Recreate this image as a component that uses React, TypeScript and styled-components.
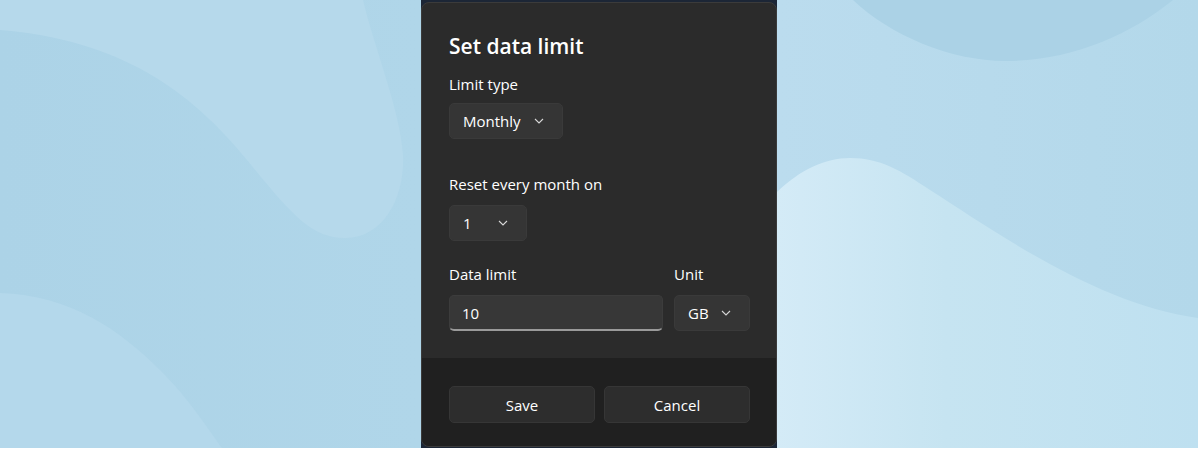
import styled, { createGlobalStyle } from 'styled-components';

const GlobalStyle = createGlobalStyle`
  body {
    margin: 0;
    background: #ffffff;
    font-family: "Open Sans", "Noto Sans", sans-serif;
  }
`;

function Wallpaper() {
  return (
    <Backdrop viewBox="0 0 1198 448" preserveAspectRatio="none">
      <defs>
        <linearGradient id="base" x1="0" y1="0" x2="1" y2="0">
          <stop offset="0" stopColor="#acd3e7" />
          <stop offset="0.35" stopColor="#b0d6e9" />
          <stop offset="0.65" stopColor="#bbdcee" />
          <stop offset="1" stopColor="#b3d8ea" />
        </linearGradient>
        <linearGradient id="lower" x1="0" y1="0" x2="1" y2="0">
          <stop offset="0" stopColor="#d4ebf7" />
          <stop offset="0.4" stopColor="#c6e4f1" />
          <stop offset="1" stopColor="#bee0f0" />
        </linearGradient>
      </defs>
      <rect width="1198" height="448" fill="url(#base)" />
      <path
        d="M0,30 C120,40 190,90 247,160 C290,212 310,238 345,238 C385,238 405,195 403,155 C400,110 375,50 363,0 L0,0 Z"
        fill="#b6d9eb"
      />
      <path d="M0,293 C70,295 120,330 160,370 C190,400 205,425 222,448 L0,448 Z" fill="#b4d8eb" />
      <path d="M853,0 C890,35 950,61 1006,61 C1070,61 1130,35 1173,0 Z" fill="#abd2e6" />
      <path
        d="M777,192 C800,170 825,158 850,158 C880,158 900,170 930,190 C1000,235 1100,305 1198,318 L1198,448 L777,448 Z"
        fill="url(#lower)"
      />
    </Backdrop>
  );
}

function Chevron() {
  return (
    <svg width="10" height="6" viewBox="0 0 10 6">
      <polyline points="1,1 5,5 9,1" fill="none" stroke="#d6d6d6" strokeWidth="1.1" />
    </svg>
  );
}

export default function App() {
  return (
    <>
      <GlobalStyle />
      <Stage>
        <Wallpaper />
        <Shade>
          <Dialog>
            <Content>
              <Title>Set data limit</Title>
              <Label $top={13}>Limit type</Label>
              <Select $width={114} $top={9}>
                Monthly
                <Chevron />
              </Select>
              <Label $top={35}>Reset every month on</Label>
              <Select $width={78} $top={11}>
                1
                <Chevron />
              </Select>
              <LimitRow>
                <Field>
                  <Label $top={0}>Data limit</Label>
                  <TextBox>10</TextBox>
                </Field>
                <Field>
                  <Label $top={0}>Unit</Label>
                  <Select $width={76} $top={11}>
                    GB
                    <Chevron />
                  </Select>
                </Field>
              </LimitRow>
            </Content>
            <Footer>
              <Button>Save</Button>
              <Button>Cancel</Button>
            </Footer>
          </Dialog>
        </Shade>
      </Stage>
    </>
  );
}

const Stage = styled.div`
  display: grid;
  width: 1198px;
  height: 448px;
  overflow: hidden;

  & > * {
    grid-area: 1 / 1;
  }
`;

const Backdrop = styled.svg`
  width: 1198px;
  height: 448px;
  display: block;
`;

const Shade = styled.div`
  justify-self: center;
  width: 356px;
  height: 448px;
  background: #1c2636;
  padding-top: 2px;
  box-sizing: border-box;
`;

const Dialog = styled.div`
  display: flex;
  flex-direction: column;
  height: 445px;
  box-sizing: border-box;
  border: 1px solid #3b3b3b;
  border-radius: 8px;
  overflow: hidden;
  background: #2b2b2b;
  color: #ffffff;
`;

const Content = styled.div`
  display: flex;
  flex-direction: column;
  align-items: flex-start;
  flex: 1;
  padding: 28px 26px 0 27px;
`;

const Title = styled.div`
  font-size: 21px;
  font-weight: 600;
  line-height: 30px;
`;

const Label = styled.div<{ $top: number }>`
  margin-top: ${(p) => p.$top}px;
  font-size: 15px;
  line-height: 20px;
`;

const Select = styled.div<{ $width: number; $top: number }>`
  display: flex;
  align-items: center;
  justify-content: space-between;
  box-sizing: border-box;
  width: ${(p) => p.$width}px;
  height: 36px;
  margin-top: ${(p) => p.$top}px;
  padding: 0 18px 0 13px;
  background: #353535;
  border: 1px solid #3a3a3a;
  border-radius: 5px;
  font-size: 15px;
`;

const LimitRow = styled.div`
  display: flex;
  gap: 11px;
  margin-top: 23px;
`;

const Field = styled.div`
  display: flex;
  flex-direction: column;
`;

const TextBox = styled.div`
  display: flex;
  align-items: center;
  box-sizing: border-box;
  width: 214px;
  height: 36px;
  margin-top: 11px;
  padding: 0 12px;
  background: #373737;
  border: 1px solid #3c3c3c;
  border-bottom: 2px solid #9a9a9a;
  border-radius: 5px;
  font-size: 15px;
`;

const Footer = styled.div`
  display: flex;
  gap: 9px;
  height: 88px;
  box-sizing: border-box;
  padding: 28px 26px 0 27px;
  background: #202020;
`;

const Button = styled.div`
  display: flex;
  align-items: center;
  justify-content: center;
  flex: 1;
  height: 35px;
  background: #2d2d2d;
  border: 1px solid #363636;
  border-radius: 5px;
  font-size: 15px;
`;
